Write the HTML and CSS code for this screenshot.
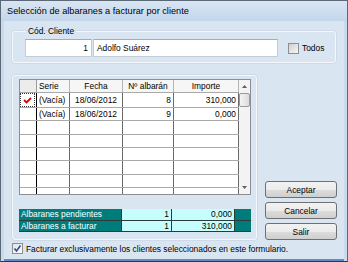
FILE: index.html
```html
<!DOCTYPE html>
<html lang="es">
<head>
<meta charset="utf-8">
<link rel="stylesheet" href="styles.css">
</head>
<body>
<div class="window">
  <div class="titlebar">Selección de albaranes a facturar por cliente</div>
  <div class="client">
    <fieldset class="group group-cliente">
      <legend>Cód. Cliente</legend>
      <div class="cliente-row">
        <div class="input input-code">1</div>
        <div class="input input-name">Adolfo Suárez</div>
        <label class="check check-todos"><span class="box"></span><span>Todos</span></label>
      </div>
    </fieldset>

    <div class="middle">
      <div class="group group-grid">
        <div class="grid">
          <div class="grid-body">
            <div class="row header">
              <div class="cell ind"></div>
              <div class="cell left">Serie</div>
              <div class="cell center">Fecha</div>
              <div class="cell center">Nº albarán</div>
              <div class="cell center">Importe</div>
            </div>
            <div class="row first">
              <div class="cell ind"><span class="focus"><svg width="9" height="7" viewBox="0 0 9 7"><polyline points="1,3 3.5,5.5 8,1" fill="none" stroke="#e00000" stroke-width="1.8"/></svg></span></div>
              <div class="cell left">(Vacía)</div>
              <div class="cell center">18/06/2012</div>
              <div class="cell right">8</div>
              <div class="cell right">310,000</div>
            </div>
            <div class="row">
              <div class="cell ind"></div>
              <div class="cell left">(Vacía)</div>
              <div class="cell center">18/06/2012</div>
              <div class="cell right">9</div>
              <div class="cell right">0,000</div>
            </div>
            <div class="row"><div class="cell ind"></div><div class="cell"></div><div class="cell"></div><div class="cell"></div><div class="cell"></div></div>
            <div class="row"><div class="cell ind"></div><div class="cell"></div><div class="cell"></div><div class="cell"></div><div class="cell"></div></div>
            <div class="row"><div class="cell ind"></div><div class="cell"></div><div class="cell"></div><div class="cell"></div><div class="cell"></div></div>
            <div class="row"><div class="cell ind"></div><div class="cell"></div><div class="cell"></div><div class="cell"></div><div class="cell"></div></div>
            <div class="row"><div class="cell ind"></div><div class="cell"></div><div class="cell"></div><div class="cell"></div><div class="cell"></div></div>
            <div class="row"><div class="cell ind"></div><div class="cell"></div><div class="cell"></div><div class="cell"></div><div class="cell"></div></div>
          </div>
          <div class="scrollbar">
            <div class="arrow"><svg width="5" height="3" viewBox="0 0 5 3"><polygon points="0,3 2.5,0 5,3" fill="#606060"/></svg></div>
            <div class="thumb"></div>
            <div class="track"></div>
            <div class="arrow"><svg width="5" height="3" viewBox="0 0 5 3"><polygon points="0,0 2.5,3 5,0" fill="#606060"/></svg></div>
          </div>
        </div>
        <div class="totals">
          <div class="t-label">Albaranes pendientes</div>
          <div class="t-val">1</div>
          <div class="t-val">0,000</div>
          <div class="t-end"></div>
          <div class="t-label">Albaranes a facturar</div>
          <div class="t-val">1</div>
          <div class="t-val">310,000</div>
          <div class="t-end"></div>
        </div>
      </div>
      <div class="buttons">
        <button class="btn">Aceptar</button>
        <button class="btn">Cancelar</button>
        <button class="btn">Salir</button>
      </div>
    </div>

    <label class="check check-bottom"><span class="box checked"><svg width="9" height="9" viewBox="0 0 9 9"><polyline points="1.5,4.5 3.5,7 7.5,1.5" fill="none" stroke="#2b4a9c" stroke-width="1.6"/></svg></span><span>Facturar exclusivamente los clientes seleccionados en este formulario.</span></label>
  </div>
</div>
</body>
</html>
```
FILE: styles.css
```css
* { box-sizing: border-box; }
html, body { margin: 0; padding: 0; }
body {
  width: 348px;
  height: 262px;
  overflow: hidden;
  font-family: "Liberation Sans", Arial, sans-serif;
  font-size: 8.4px;
  color: #000;
}
.window {
  width: 348px;
  height: 262px;
  border: 1px solid #5b6876;
  border-bottom-color: #1f3a58;
  background: #c9daed;
  display: flex;
  flex-direction: column;
}
.titlebar {
  height: 20px;
  line-height: 20px;
  padding-left: 6px;
  font-size: 9.2px;
  color: #000;
  background: linear-gradient(#d9e5f3, #c3d6eb);
  white-space: nowrap;
}
.client {
  flex: 1;
  margin: 0 3px;
  background: #dae5f2;
  border-bottom: 2px solid #5a8fcb;
  padding: 5px 8px 0 8px;
  display: flex;
  flex-direction: column;
}
.group {
  border: 1px solid #f4f7fb;
  border-radius: 3px;
  box-shadow: 0 0 0 0.5px #c3d0de;
}
.group-cliente {
  margin: 0;
  padding: 3px 0 5px 12px;
  min-width: 0;
}
.group-cliente legend {
  line-height: 10px;
  padding: 0 2px;
  margin-left: 1px;
}
.cliente-row {
  display: flex;
  align-items: center;
}
.input {
  height: 18px;
  background: #fff;
  border: 1px solid #c4ccd6;
  border-top-color: #a3acb8;
  line-height: 16px;
  white-space: nowrap;
}
.input-code {
  width: 67px;
  margin-right: 1px;
  text-align: right;
  padding-right: 3px;
}
.input-name {
  width: 185px;
  padding-left: 3px;
}
.check {
  display: flex;
  align-items: center;
  white-space: nowrap;
}
.check .box {
  width: 11px;
  height: 11px;
  border: 1px solid #8e8f90;
  background: linear-gradient(135deg, #d0d0d0, #f6f6f6);
  margin-right: 3px;
  display: flex;
  align-items: center;
  justify-content: center;
  flex: none;
}
.check .box.checked {
  background: linear-gradient(135deg, #e2e2e2, #ffffff);
}
.check-todos {
  margin-left: 10px;
}
.middle {
  display: flex;
  align-items: flex-end;
  margin-top: 12px;
}
.group-grid {
  width: 245px;
  padding: 3px 5px 7px 6px;
}
.grid {
  height: 116px;
  border: 1px solid #8d8f94;
  background: #fff;
  display: flex;
  overflow: hidden;
}
.grid-body {
  width: 219px;
  overflow: hidden;
}
.row {
  display: grid;
  grid-template-columns: 17px 33px 53px 51px 65px;
  height: 13.34px;
  border-bottom: 1px solid #a9a9a9;
}
.row.header {
  height: 13px;
  background: #f6f6f6;
}
.row.first { height: 15px; }
.cell {
  border-right: 1px solid #6a6a6a;
  line-height: 12px;
  white-space: nowrap;
  overflow: hidden;
}
.header .cell { border-right-color: #b5b5b5; }
.cell.ind { border-right-color: #000; }
.header .cell.ind { background: #ececec; border-right-color: #9a9a9a; }
.cell.left { padding-left: 2px; }
.cell.center { text-align: center; }
.cell.right { text-align: right; padding-right: 2px; }
.first .cell { line-height: 14px; }
.focus {
  display: flex;
  align-items: center;
  justify-content: center;
  height: 100%;
  margin-right: 1px;
  border: 1px dotted #333;
}
.scrollbar {
  flex: 1;
  display: flex;
  flex-direction: column;
  background: #f3f3f3;
}
.arrow {
  height: 13px;
  display: flex;
  align-items: center;
  justify-content: center;
}
.thumb {
  height: 14px;
  margin: 0 0 0 0;
  border: 1px solid #9a9a9a;
  border-radius: 2px;
  background: linear-gradient(90deg, #f4f4f4, #dcdcdc);
}
.track { flex: 1; }
.totals {
  margin-top: 14px;
  display: grid;
  grid-template-columns: 102px 49px 62px 16px;
  grid-template-rows: 11px 10px;
  gap: 1px;
  padding: 0 1px 1px 0;
  background: #2c3a3a;
}
.t-label {
  background: #007d7b;
  color: #fff;
  padding-left: 2px;
  line-height: 11px;
  white-space: nowrap;
}
.t-val {
  background: #c6fdfd;
  text-align: right;
  padding-right: 2px;
  line-height: 11px;
}
.t-end { background: #007d7b; }
.buttons {
  margin-left: 8px;
  display: flex;
  flex-direction: column;
  gap: 4px;
}
.btn {
  width: 72px;
  height: 17px;
  padding: 0;
  font-family: inherit;
  font-size: 8.4px;
  color: #000;
  border: 1px solid #707070;
  border-radius: 3px;
  background: linear-gradient(#f2f2f2 0%, #ebebeb 50%, #dddddd 51%, #cfcfcf 100%);
}
.check-bottom {
  margin-top: 3px;
}
```
